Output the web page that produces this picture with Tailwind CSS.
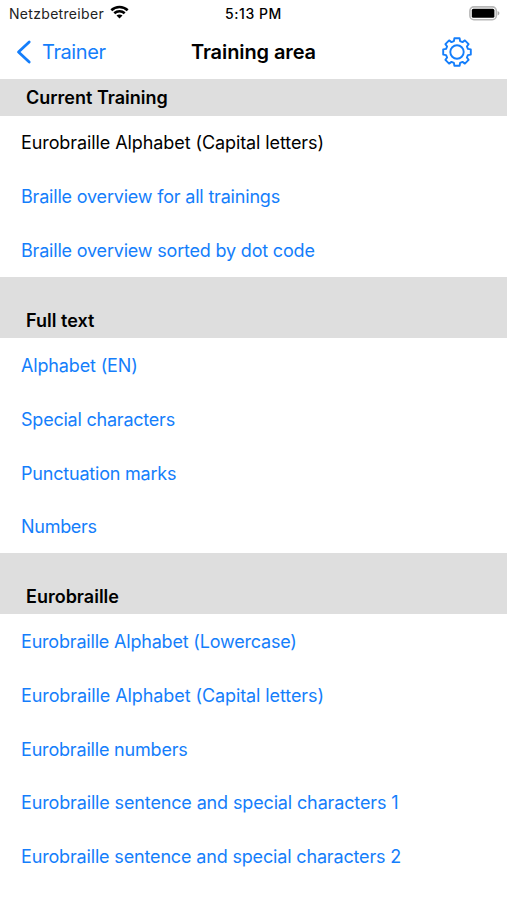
<!DOCTYPE html>
<html lang="en">
<head>
<meta charset="utf-8">
<title>Training area</title>
<script src="https://cdn.jsdelivr.net/npm/@tailwindcss/browser@4"></script>
</head>
<body class="bg-white">
<div class="flex h-[900px] w-[507px] flex-col overflow-hidden bg-white font-['Inter','Liberation_Sans',sans-serif] text-[18px] text-black">
  <div class="grid h-[27px] shrink-0 grid-cols-3 items-center px-[7px] text-[14px]">
    <div class="flex items-center gap-[6px] pl-[2px]">
      <span class="tracking-[0.31px] text-[#222]">Netzbetreiber</span>
      <svg class="-mt-[2px]" width="19" height="15" viewBox="0 0 19 15" fill="none" stroke="#000" stroke-width="2.6"><path d="M1.3 5.2C6 .9 13 .9 17.7 5.2M4.3 8.3c3-2.7 7.4-2.7 10.4 0"/><path d="M6.5 10.6c1.8-1.5 4.2-1.5 6 0l-3 3z" fill="#000" stroke="none"/></svg>
    </div>
    <span class="text-center font-medium tracking-[0.55px]">5:13 PM</span>
    <svg class="justify-self-end" width="31" height="15" viewBox="0 0 31 15"><rect x=".9" y=".9" width="26.4" height="12.8" rx="4" fill="#fff" stroke="#b8b8b8" stroke-width="1.6"/><rect x="2.8" y="2.8" width="22.6" height="9" rx="1.6" fill="#000"/><path d="M28.6 5c2.4.8 2.4 3.6 0 4.4z" fill="#aaa"/></svg>
  </div>
  <header class="grid h-[52px] shrink-0 grid-cols-3 items-center px-[16px] pb-[2px] text-[20px]">
    <div class="flex items-center gap-[10px] text-[#147efb]">
      <svg width="16" height="26" viewBox="0 0 16 26" fill="none" stroke="currentColor" stroke-width="2.8" stroke-linecap="round" stroke-linejoin="round"><path d="M13.2 3 2.5 13l10.7 10"/></svg>
      <span class="tracking-[-0.4px]">Trainer</span>
    </div>
    <span class="text-center font-semibold tracking-[-0.1px] whitespace-nowrap">Training area</span>
    <svg class="mr-[18px] justify-self-end text-[#147efb]" width="32" height="32" viewBox="-16 -16 32 32" fill="none" stroke="currentColor" stroke-width="1.9" stroke-linejoin="round"><path d="M-3.1-10.9-2.6-13.8H2.6L3.1-10.9 5.5-9.9 7.9-11.6 11.6-7.9 9.9-5.5 10.9-3.1 13.8-2.6V2.6L10.9 3.1 9.9 5.5 11.6 7.9 7.9 11.6 5.5 9.9 3.1 10.9 2.6 13.8H-2.6L-3.1 10.9-5.5 9.9-7.9 11.6-11.6 7.9-9.9 5.5-10.9 3.1-13.8 2.6V-2.6L-10.9-3.1-9.9-5.5-11.6-7.9-7.9-11.6-5.5-9.9Z"/><circle r="6.7"/></svg>
  </header>
  <h2 class="flex h-[36.5px] shrink-0 items-end bg-[#dedede] pb-[4.5px] pl-[26px] leading-[26px] font-semibold"><span>Current Training</span></h2>
  <ul class="h-[161.5px] shrink-0 pt-[0.5px] pl-[21px] leading-[53.8px] text-[#147efb]">
    <li class="text-black"><span class="tracking-[-0.09px]">Eurobraille Alphabet (Capital letters)</span></li>
    <li><span class="tracking-[-0.19px]">Braille overview for all trainings</span></li>
    <li><span class="tracking-[-0.19px]">Braille overview sorted by dot code</span></li>
  </ul>
  <h2 class="flex h-[61px] shrink-0 items-end bg-[#dedede] pb-[4px] pl-[26px] leading-[26px] font-semibold"><span>Full text</span></h2>
  <ul class="h-[215px] shrink-0 pt-[1px] pl-[21px] leading-[53.8px] text-[#147efb]">
    <li><span class="tracking-[-0.15px]">Alphabet (EN)</span></li>
    <li><span class="tracking-[-0.22px]">Special characters</span></li>
    <li><span class="tracking-[-0.2px]">Punctuation marks</span></li>
    <li><span class="tracking-[-0.28px]">Numbers</span></li>
  </ul>
  <h2 class="flex h-[61px] shrink-0 items-end bg-[#dedede] pb-[4px] pl-[26px] leading-[26px] font-semibold"><span>Eurobraille</span></h2>
  <ul class="shrink-0 pt-[1px] pl-[21px] leading-[53.8px] text-[#147efb]">
    <li><span class="tracking-[-0.19px]">Eurobraille Alphabet (Lowercase)</span></li>
    <li><span class="tracking-[-0.09px]">Eurobraille Alphabet (Capital letters)</span></li>
    <li><span class="tracking-[-0.18px]">Eurobraille numbers</span></li>
    <li><span class="tracking-[-0.14px]">Eurobraille sentence and special characters 1</span></li>
    <li><span class="tracking-[-0.16px]">Eurobraille sentence and special characters 2</span></li>
  </ul>
</div>
</body>
</html>
